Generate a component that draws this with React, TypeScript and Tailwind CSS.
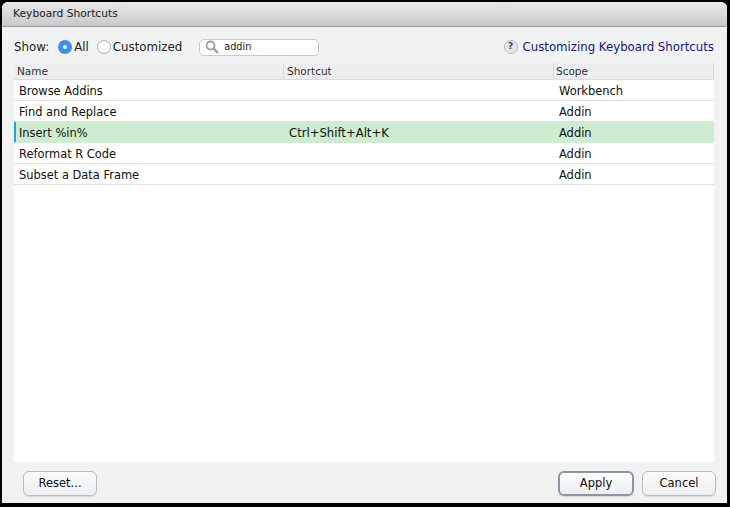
import React from "react";

const rows = [
  ["Browse Addins", "", "Workbench"],
  ["Find and Replace", "", "Addin"],
  ["Insert %in%", "Ctrl+Shift+Alt+K", "Addin"],
  ["Reformat R Code", "", "Addin"],
  ["Subset a Data Frame", "", "Addin"],
];

function Btn({ label, width, primary }: { label: string; width: string; primary?: boolean }) {
  return (
    <button
      className={`h-[25px] ${width} pt-[1px] rounded-[6px] bg-gradient-to-b from-[#fbfbfc] to-[#eceef0] text-[11.5px] text-[#111] shadow-[0_1px_1px_rgba(0,0,0,0.12)] ${
        primary ? "border-2 border-[#8a96a3]" : "border border-[#bcbcbc]"
      }`}
    >
      {label}
    </button>
  );
}

export default function App() {
  return (
    <div className="w-[730px] h-[507px] bg-black pt-[2px] pl-[2px] font-['DejaVu_Sans',sans-serif]">
      <div className="w-[725px] h-[501px] flex flex-col rounded-t-[6px] overflow-hidden bg-[#f1f3f3]">
        <div className="h-[25px] shrink-0 flex items-center pl-[11px] text-[10.7px] text-[#222] bg-gradient-to-b from-[#e9e9ea] to-[#c8c9cb] border-b border-[#9c9c9c]">
          Keyboard Shortcuts
        </div>
        <div className="h-[36px] shrink-0 flex items-center pt-[4px] pl-[12px] pr-[13px] text-[11.8px] text-[#222]">
          <span className="mr-[9px] pt-[1px]">Show:</span>
          <span className="w-[14px] h-[14px] rounded-full bg-[#3b8ff0] flex items-center justify-center mr-[2px]">
            <span className="w-[4px] h-[4px] rounded-full bg-white" />
          </span>
          <span className="mr-[8px] pt-[1px]">All</span>
          <span className="w-[14px] h-[14px] rounded-full bg-white border border-[#a9a9a9] mr-[2px]" />
          <span className="pt-[1px]">Customized</span>
          <div className="ml-[17px] w-[120px] h-[17px] bg-white border border-[#c9c9c9] rounded-[5px] flex items-center pl-[5px] text-[9.7px] text-[#222]">
            <svg width="14" height="14" viewBox="0 0 14 14" fill="none" stroke="#a0a0a0" strokeWidth="1.8" className="mr-[5px]">
              <circle cx="5.5" cy="5.5" r="4" />
              <path d="M8.6 8.6 L13 13" strokeWidth="2.4" />
            </svg>
            addin
          </div>
          <div className="ml-auto flex items-center">
            <span className="w-[14px] h-[14px] rounded-full bg-[#e3e5e7] border border-[#b5b7ba] flex items-center justify-center text-[9px] font-bold text-[#444] mr-[5px]">
              ?
            </span>
            <span className="text-[#15158c] text-[11.75px] pt-[1px]">Customizing Keyboard Shortcuts</span>
          </div>
        </div>
        <div className="flex-1 ml-[12px] mr-[13px] bg-white flex flex-col text-[11.45px] text-[#111]">
          <div className="h-[17px] shrink-0 flex bg-[#eceef0] text-[10.5px] text-[#333] border-b border-[#dcdcdc]">
            <div className="w-[270px] pl-[3px] pt-[1px] border-r border-[#d8d8d8] flex items-center">Name</div>
            <div className="w-[270px] pl-[3px] pt-[1px] border-r border-[#d8d8d8] flex items-center">Shortcut</div>
            <div className="flex-1 pl-[2px] pt-[1px] flex items-center border-r border-[#d8d8d8]">Scope</div>
          </div>
          {rows.map((r) => {
            const sel = r[1] !== "";
            return (
              <div
                key={r[0]}
                className={`h-[21px] shrink-0 flex items-stretch border-b ${
                  sel ? "bg-[#ceeccf] border-[#ceeccf]" : "border-[#dfdfdf]"
                }`}
              >
                <div className={`w-[270px] flex items-center pt-[3px] ${sel ? "border-l-2 border-[#1aa0f0] pl-[3px]" : "pl-[5px]"}`}>
                  {r[0]}
                </div>
                <div className="w-[270px] flex items-center pt-[3px] pl-[5px] text-[11.65px]">{r[1]}</div>
                <div className="flex-1 flex items-center pt-[3px] pl-[5px]">{r[2]}</div>
              </div>
            );
          })}
        </div>
        <div className="h-[41px] shrink-0 flex items-center pt-[1px] pl-[21px] pr-[11px]">
          <Btn label="Reset..." width="w-[74px]" />
          <div className="ml-auto flex gap-[8px]">
            <Btn label="Apply" width="w-[76px]" primary />
            <Btn label="Cancel" width="w-[74px]" />
          </div>
        </div>
      </div>
    </div>
  );
}
